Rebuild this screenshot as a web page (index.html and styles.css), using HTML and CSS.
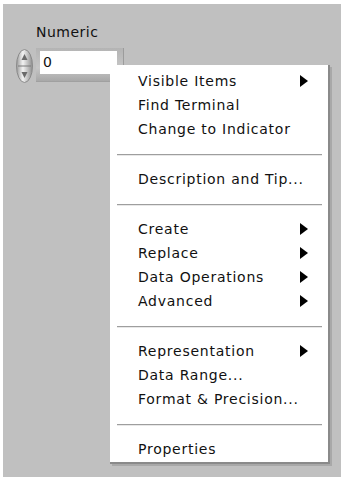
FILE: index.html
```html
<!DOCTYPE html>
<html>
<head>
<meta charset="utf-8">
<link rel="stylesheet" href="styles.css">
</head>
<body>
<div class="panel">
  <div class="label">Numeric</div>
  <div class="control">
    <svg class="spinner" width="17" height="34" viewBox="0 0 17 34">
      <defs>
        <linearGradient id="g" x1="0" y1="0" x2="1" y2="0">
          <stop offset="0" stop-color="#9a9a9a"/>
          <stop offset="0.4" stop-color="#f2f2f2"/>
          <stop offset="1" stop-color="#8e8e8e"/>
        </linearGradient>
      </defs>
      <ellipse cx="8.5" cy="17" rx="8" ry="16.5" fill="url(#g)" stroke="#8a8a8a" stroke-width="1"/>
      <line x1="2" y1="17" x2="15" y2="17" stroke="#7a7a7a" stroke-width="1"/>
      <path d="M8.5 5 L11.5 11 L5.5 11 Z" fill="#6a6a6a"/>
      <path d="M8.5 29 L11.5 23 L5.5 23 Z" fill="#6a6a6a"/>
    </svg>
    <div class="frame"><div class="digital">0</div></div>
  </div>

  <div class="menu">
    <div class="item"><span>Visible Items</span><i class="arrow"></i></div>
    <div class="item"><span>Find Terminal</span></div>
    <div class="item"><span>Change to Indicator</span></div>
    <div class="sep"></div>
    <div class="item"><span>Description and Tip...</span></div>
    <div class="sep"></div>
    <div class="item"><span>Create</span><i class="arrow"></i></div>
    <div class="item"><span>Replace</span><i class="arrow"></i></div>
    <div class="item"><span>Data Operations</span><i class="arrow"></i></div>
    <div class="item"><span>Advanced</span><i class="arrow"></i></div>
    <div class="sep"></div>
    <div class="item"><span>Representation</span><i class="arrow"></i></div>
    <div class="item"><span>Data Range...</span></div>
    <div class="item"><span>Format &amp; Precision...</span></div>
    <div class="sep"></div>
    <div class="item"><span>Properties</span></div>
  </div>
</div>
</body>
</html>
```
FILE: styles.css
```css
html, body {
  margin: 0;
  padding: 0;
  background: #ffffff;
}
body {
  font-family: "DejaVu Sans", "Liberation Sans", sans-serif;
  font-size: 14px;
  color: #111111;
}
.panel {
  position: relative;
  margin: 4px 0 0 3px;
  width: 338px;
  height: 473px;
  background: #c0c0c0;
  padding: 20px 0 0 13px;
  box-sizing: border-box;
}
.label {
  margin-left: 20px;
  line-height: 16px;
  height: 16px;
  letter-spacing: 0.5px;
}
.control {
  display: flex;
  align-items: flex-start;
  gap: 3px;
  margin-top: 8px;
}
.spinner {
  display: block;
  margin-top: 1px;
}
.frame {
  padding: 3px 6px 7px 4px;
  background: linear-gradient(to bottom, #b4b4b4, #c6c6c6 60%, #a8a8a8);
  border-right: 1px solid #9c9c9c;
  border-bottom: 1px solid #a0a0a0;
}
.digital {
  width: 77px;
  height: 23px;
  background: #ffffff;
  line-height: 23px;
  padding-left: 3px;
  box-sizing: border-box;
}
.menu {
  position: absolute;
  left: 107px;
  top: 61px;
  width: 218px;
  background: #ffffff;
  border-right: 2px solid #8a8a8a;
  border-bottom: 2px solid #8a8a8a;
  box-shadow: 2px 2px 0 #a8a8a8;
  padding: 4px 0 1px;
}
.item {
  display: flex;
  justify-content: space-between;
  align-items: center;
  height: 24px;
  padding: 0 20px 0 28px;
  letter-spacing: 0.75px;
}
.item span {
  white-space: nowrap;
}
.arrow {
  display: block;
  width: 0;
  height: 0;
  border-left: 8px solid #000000;
  border-top: 6px solid transparent;
  border-bottom: 6px solid transparent;
}
.sep {
  height: 26px;
  margin: 0 6px 0 7px;
}
.sep::before {
  content: "";
  display: block;
  height: 0;
  border-top: 1px solid #9e9e9e;
  border-bottom: 1px solid #e8e8e8;
  position: relative;
  top: 13px;
}
```
